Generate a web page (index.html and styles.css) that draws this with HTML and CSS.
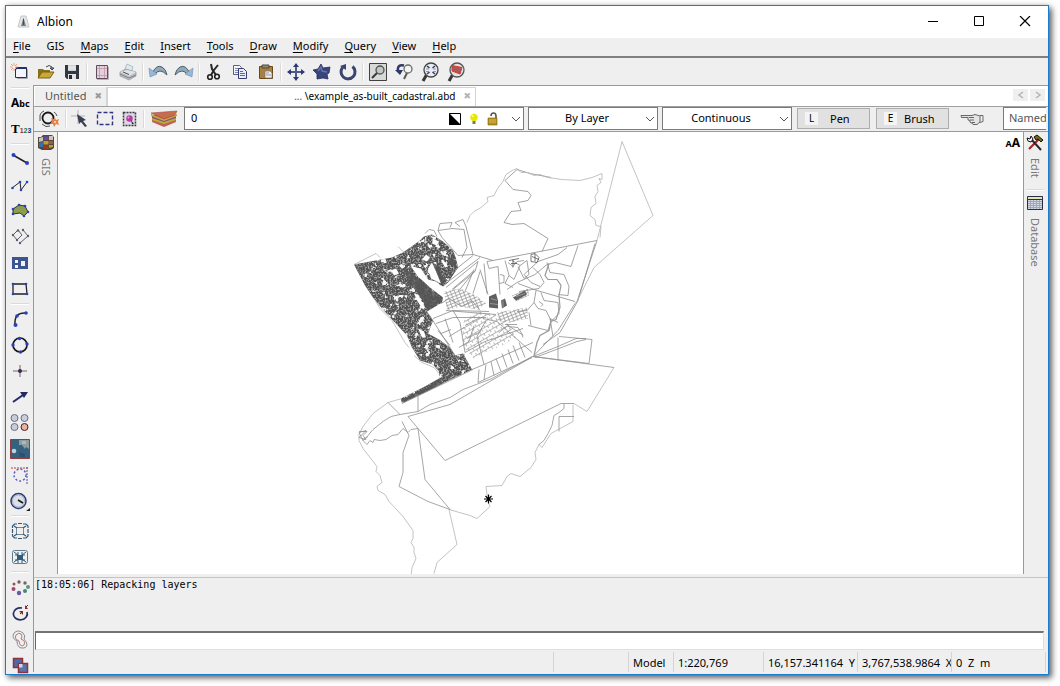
FILE: index.html
```html
<!DOCTYPE html>
<html lang="en">
<head>
<meta charset="utf-8">
<title>Albion</title>
<link rel="stylesheet" href="styles.css">
</head>
<body>
<div class="window">
  <header class="titlebar">
    <svg class="app-icon" viewBox="0 0 14 14"><path d="M4 1h5l3 11H1z" fill="#e4e6e8" stroke="#c4c8cc"/><path d="M6.500 2.500L9 11H4z" fill="#7b8085"/><path d="M6.500 4v6" stroke="#484c50"/></svg>
    <h1 class="title">Albion</h1>
    <div class="window-controls">
      <button class="win-btn" aria-label="Minimize"><svg viewBox="0 0 12 12"><path d="M1 5.500h10" stroke="#000"/></svg></button>
      <button class="win-btn" aria-label="Maximize"><svg viewBox="0 0 12 12"><path d="M1.500.500h9v9h-9z" fill="none" stroke="#000"/></svg></button>
      <button class="win-btn" aria-label="Close"><svg viewBox="0 0 12 12"><path d="M1 0l10 10M11 0L1 10" stroke="#000" stroke-width="1.200"/></svg></button>
    </div>
  </header>

  <nav class="menubar">
    <button class="menu"><u>F</u>ile</button><button class="menu">GIS</button><button class="menu"><u>M</u>aps</button><button class="menu"><u>E</u>dit</button><button class="menu"><u>I</u>nsert</button><button class="menu"><u>T</u>ools</button><button class="menu"><u>D</u>raw</button><button class="menu"><u>M</u>odify</button><button class="menu"><u>Q</u>uery</button><button class="menu"><u>V</u>iew</button><button class="menu"><u>H</u>elp</button>
  </nav>

  <div class="toolbar">
    <button class="tool" aria-label="New"><svg viewBox="0 0 20 20"><path d="M5.500 5.500h11v10h-11z" fill="#f4f6ff" stroke="#303048"/><path d="M6 5h10.500v2H6z" fill="#24306c"/><path d="M17.500 7v9.500H7" fill="none" stroke="#a8a8b0"/><path d="M4 1v8M0 5h8M1 2l6 6M7 2L1 8" stroke="#e8a080"/><circle cx="4" cy="5" r="1.500" fill="#fff4e0"/></svg></button>
    <button class="tool" aria-label="Open"><svg viewBox="0 0 20 20"><path d="M2 7h5l1 1h6v7H2z" fill="#8c7018"/><path d="M2 16l4-6h12l-4 6z" fill="#c8a838" stroke="#7c6010"/><path d="M10 5q3-3 6 0v2M14 6h4l-2 2z" fill="none" stroke="#404850"/></svg></button>
    <button class="tool" aria-label="Save"><svg viewBox="0 0 20 20"><path d="M3 3h14v14H5l-2-2z" fill="#34383e"/><path d="M6 3h8v6H6z" fill="#c8d0d8"/><path d="M6 5h8M6 7h8" stroke="#f8f8f8"/><path d="M6 12h8v5H6z" fill="#e0e4e8"/><path d="M7 13h3v4H7z" fill="#282c32"/></svg></button>
    <span class="sep-v"></span>
    <button class="tool" aria-label="Page layout"><svg viewBox="0 0 20 20"><path d="M4.500 3.500h11v13h-11z" fill="#e2d0da" stroke="#604c60"/><path d="M7.500 4v12M12.500 4v12M5 6.500h10M5 13.500h10" stroke="#c894a4" stroke-width=".8"/><path d="M5 17.500h11.500V5" fill="none" stroke="#b8b0b8"/></svg></button>
    <button class="tool" aria-label="Print"><svg viewBox="0 0 20 20"><path d="M6 9l3-7 6 3-2 6z" fill="#dceaf4" stroke="#b0bcc4"/><path d="M2 10l6-3 10 3v4l-7 4-9-4z" fill="#bcc0c4" stroke="#909498" stroke-width=".7"/><path d="M2 10l9 4 7-4-9-2z" fill="#e0e2e4"/><path d="M2 12l9 4 7-3" fill="none" stroke="#7c8084"/><path d="M5 10l6 2.500" stroke="#484c50"/></svg></button>
    <span class="sep-v"></span>
    <button class="tool" aria-label="Undo"><svg viewBox="0 0 20 20"><path d="M4 12Q8 2 14 5q4 2 5 8-4-4-7-4-3 0-6 4z" fill="#90a8b8" stroke="#4c6070"/><path d="M1 6l1 9 7-3z" fill="#98b8d8" stroke="#6c8cac" stroke-width=".6"/></svg></button>
    <button class="tool" aria-label="Redo"><svg viewBox="0 0 20 20"><path d="M16 12Q12 2 6 5q-4 2-5 8 4-4 7-4 3 0 6 4z" fill="#90a8b8" stroke="#4c6070"/><path d="M19 6l-1 9-7-3z" fill="#98b8d8" stroke="#6c8cac" stroke-width=".6"/></svg></button>
    <span class="sep-v"></span>
    <button class="tool" aria-label="Cut"><svg viewBox="0 0 20 20"><path d="M7 2l1 5 4 6M14 3l-4 5-3 5" fill="none" stroke="#282828" stroke-width="2"/><circle cx="6" cy="15" r="2.300" fill="none" stroke="#202020" stroke-width="1.600"/><circle cx="13" cy="14.500" r="2.300" fill="none" stroke="#202020" stroke-width="1.600"/></svg></button>
    <button class="tool" aria-label="Copy"><svg viewBox="0 0 20 20"><path d="M3.500 3.500h6l2 2v7h-8z" fill="#f4f6fc" stroke="#586088"/><path d="M5 6.500h4M5 8.500h4M5 10.500h3" stroke="#8088b0"/><path d="M8.500 6.500h5l3 3v7h-8z" fill="#e8ecfa" stroke="#343c70"/><path d="M10 9.500h3M10 11.500h5M10 13.500h5" stroke="#6068a0"/></svg></button>
    <button class="tool" aria-label="Paste"><svg viewBox="0 0 20 20"><path d="M3.500 4.500h13v12h-13z" fill="#a88040" stroke="#684818"/><path d="M6 3h7v3H6z" fill="#8c887c" stroke="#504838"/><path d="M9 9h5l2 2v5H9z" fill="#f0f0f4" stroke="#707080" stroke-width=".7"/><path d="M10 11h3M10 13h5" stroke="#9898a8"/></svg></button>
    <span class="sep-v"></span>
    <button class="tool" aria-label="Move"><svg viewBox="0 0 20 20"><path d="M10 3v14M3 10h14" stroke="#505888" stroke-width="2"/><path d="M10 1l3 4H7zM10 19l3-4H7zM1 10l4-3v6zM19 10l-4-3v6z" fill="#303870"/></svg></button>
    <button class="tool" aria-label="Transform"><svg viewBox="0 0 20 20"><path d="M9 2l2 4 7-1-1 6-2 1 1 5-5-1-6 1 0-5-4-4 5-1z" fill="#38447c" stroke="#252c5c" stroke-width=".8"/><path d="M6 9l3-4 1 4 5 1" fill="none" stroke="#6474a8" stroke-width="1.500"/></svg></button>
    <button class="tool" aria-label="Rotate"><svg viewBox="0 0 20 20"><path d="M5 5a7 7 0 1 0 9.500-.5" fill="none" stroke="#3c4470" stroke-width="3"/><path d="M2 4l6-2v6z" fill="#3c4470"/></svg></button>
    <span class="sep-v"></span>
    <button class="tool" aria-label="Zoom"><svg viewBox="0 0 20 20"><path d="M1.500 1.500h17v17h-17z" fill="#d8d8d8" stroke="#404040"/><circle cx="12" cy="8" r="4" fill="#c4c8c4" stroke="#505450" stroke-width="1.300"/><path d="M9 11l-5 5" stroke="#383838" stroke-width="2"/></svg></button>
    <button class="tool" aria-label="Zoom previous"><svg viewBox="0 0 20 20"><path d="M13 11l-3 6" stroke="#585858" stroke-width="2"/><circle cx="14" cy="7" r="4" fill="#f4f4f4" stroke="#686c68" stroke-width="1.300"/><path d="M10 3.500Q3 2 4 9" fill="none" stroke="#303868" stroke-width="2.500"/><path d="M1 8h8l-3 5z" fill="#303868"/></svg></button>
    <button class="tool" aria-label="Zoom extents"><svg viewBox="0 0 20 20"><path d="M7 12l-4 7" stroke="#383838" stroke-width="3"/><circle cx="11" cy="8" r="7" fill="#e8ecec" stroke="#444" stroke-width="1.300"/><path d="M7 4l2.500 2M15 4l-2.500 2M7 12l2.500-2M15 12l-2.500-2" stroke="#303c80" stroke-width="1.600"/><path d="M6 7h3M13 7h3M6 9.500h3M13 9.500h3" stroke="#7480b0" stroke-width=".8"/></svg></button>
    <button class="tool" aria-label="Zoom window"><svg viewBox="0 0 20 20"><path d="M7 12l-4 7" stroke="#383838" stroke-width="3"/><circle cx="11" cy="8" r="7" fill="#e0e4e4" stroke="#555" stroke-width="1.300"/><path d="M6 3.500l10 2-2 6.500-8-3z" fill="#a85858" stroke="#e03828"/></svg></button>
  </div>

  <div class="main">
    <aside class="side-tools">
      <span class="sep-h"></span>
      <button class="tool abc">A<small>bc</small></button>
      <button class="tool numbered">T<small><i class="n1">1</i><i class="n2">2</i><i class="n3">3</i></small></button>
      <span class="sep-h"></span>
      <button class="tool" aria-label="Line"><svg viewBox="0 0 20 20"><path d="M3 6l14 8" stroke="#222" stroke-width="1.500"/><g fill="#2840c0"><circle cx="3.500" cy="6" r="2"/><circle cx="17" cy="14" r="2"/></g></svg></button>
      <button class="tool" aria-label="Polyline"><svg viewBox="0 0 20 20"><path d="M2 13l8-6 1 8 6-8" fill="none" stroke="#222"/><g fill="#2840c0"><circle cx="2.500" cy="13" r="1.300"/><circle cx="10" cy="7" r="1.300"/><circle cx="11" cy="15" r="1.300"/><circle cx="17" cy="7" r="1.300"/></g></svg></button>
      <button class="tool" aria-label="Polygon"><svg viewBox="0 0 20 20"><path d="M3 8l6-4 6 1 3 6-4 4-4-3-7 1z" fill="#8c9c50" stroke="#303820"/><g fill="#2840c0"><circle cx="3" cy="8" r="1.300"/><circle cx="9" cy="4" r="1.300"/><circle cx="15" cy="5" r="1.300"/><circle cx="18" cy="11" r="1.300"/><circle cx="14" cy="15" r="1.300"/><circle cx="3" cy="13" r="1.300"/></g></svg></button>
      <button class="tool" aria-label="Parallel lines"><svg viewBox="0 0 20 20"><path d="M3 8l4 5 5-5-4-5zM10 16l8-7M13 3l5 6" fill="none" stroke="#606068"/><g fill="#585c70"><circle cx="3" cy="8" r="1.200"/><circle cx="8" cy="3.500" r="1.200"/><circle cx="7" cy="13" r="1.200"/><circle cx="13" cy="3" r="1.200"/><circle cx="18" cy="9" r="1.200"/><circle cx="10" cy="16" r="1.200"/></g></svg></button>
      <button class="tool" aria-label="Polygon hole"><svg viewBox="0 0 20 20"><path d="M2 4h16v12H2z" fill="#3c5490"/><path d="M5 7h3v3H5zM5 12h3v3H5zM11 8h4v5h-4z" fill="#f0f4f8"/></svg></button>
      <button class="tool" aria-label="Rectangle"><svg viewBox="0 0 20 20"><path d="M3 5h13l1 10H3z" fill="none" stroke="#222" stroke-width="1.300"/><g fill="#2840c0"><circle cx="3" cy="5" r="1.300"/><circle cx="16" cy="5" r="1.300"/><circle cx="17" cy="15" r="1.300"/><circle cx="3" cy="15" r="1.300"/></g></svg></button>
      <span class="sep-h"></span>
      <button class="tool" aria-label="Arc"><svg viewBox="0 0 20 20"><path d="M5 16Q4 3 16 4" fill="none" stroke="#222" stroke-width="1.500"/><g fill="#2840c0"><circle cx="5.500" cy="16" r="2"/><circle cx="7" cy="7" r="1.800"/><circle cx="16" cy="4" r="1.800"/></g></svg></button>
      <button class="tool" aria-label="Circle"><svg viewBox="0 0 20 20"><circle cx="10" cy="10" r="7" fill="none" stroke="#181818" stroke-width="1.700"/><g fill="#2840c0"><circle cx="9.500" cy="3.500" r="1.700"/><circle cx="3" cy="10" r="1.700"/><circle cx="17" cy="9" r="1.700"/><circle cx="10.500" cy="17" r="1.700"/></g></svg></button>
      <button class="tool" aria-label="Point"><svg viewBox="0 0 20 20"><path d="M10 4v12M3 10h14" stroke="#806050"/><circle cx="10" cy="10" r="2" fill="#302860"/></svg></button>
      <button class="tool" aria-label="Arrow"><svg viewBox="0 0 20 20"><path d="M3 15l10-7" stroke="#202868" stroke-width="2"/><path d="M10 5l8 0-4 6z" fill="#202868"/></svg></button>
      <button class="tool" aria-label="Blocks"><svg viewBox="0 0 20 20"><g fill="#c8ccdc" stroke="#6c7078"><circle cx="4.500" cy="5" r="3.500"/><circle cx="14.500" cy="5" r="3.500"/><circle cx="4.500" cy="14" r="3.500"/><circle cx="14.500" cy="14" r="3.500" fill="#ecb0a0" stroke="#382828"/></g></svg></button>
      <button class="tool" aria-label="Raster"><svg viewBox="0 0 20 20"><path d="M.5.500h19v19H.5z" fill="#34627e" stroke="#903c40"/><path d="M9 1h10v9l-3-2-1 2-3-4-3 0z" fill="#8c9ca0"/><path d="M12 2h4v3h-4z" fill="#b0b8b8"/><circle cx="4" cy="12" r="2.300" fill="#b8d4e0"/><path d="M9 13l6 2v3h-5z" fill="#285270"/></svg></button>
      <button class="tool" aria-label="Select circle"><svg viewBox="0 0 20 20"><path d="M1 3h18" stroke="#d83840" stroke-dasharray="2 1"/><path d="M17 2v17" stroke="#5054a0" stroke-dasharray="2 1"/><circle cx="10" cy="10" r="6" fill="none" stroke="#5860c0" stroke-width="1.500" stroke-dasharray="2 2"/></svg></button>
      <button class="tool" aria-label="Measure"><svg viewBox="0 0 20 20"><circle cx="8.500" cy="10" r="7.500" fill="#dce0e8" stroke="#283c78" stroke-width="1.500"/><circle cx="8.500" cy="10" r="6" fill="none" stroke="#a8b0c0"/><path d="M8 9l5 3" stroke="#181818" stroke-width="1.700"/><path d="M20 17v3h-4z" fill="#222"/></svg></button>
      <span class="sep-h"></span>
      <button class="tool" aria-label="Expand"><svg viewBox="0 0 20 20"><path d="M6.500 6.500h7v7h-7z" fill="none" stroke="#788890"/><path d="M2.500 7V5l2-2H7M13 3h3l2 2v2M18 13v2l-2 2h-3M7 17H4.500l-2-2v-2M4 5l3 2M16 5l-3 2M16 15l-3-2M4 15l3-2M8 2.500h4M8 17.500h4M2.500 8v4M18 8v4" fill="none" stroke="#305c78" stroke-width="1.200"/></svg></button>
      <button class="tool" aria-label="Contract"><svg viewBox="0 0 20 20"><rect x="2.500" y="3.500" width="15" height="13" rx="2" fill="none" stroke="#5c7c90"/><path d="M7 8h6v5H7z" fill="#305c78"/><path d="M4 5l4 3M16 5l-4 3M16 15l-4-3M4 15l4-3M5 8h3V5M12 5v3h3M15 13h-3v3M8 16v-3H5" fill="none" stroke="#305c78"/></svg></button>
      <span class="sep-h"></span>
      <button class="tool" aria-label="Array"><svg viewBox="0 0 20 20"><circle cx="9" cy="5" r="1.700" fill="#7c5c50"/><circle cx="15" cy="6" r="1.700" fill="#686870"/><circle cx="18" cy="10" r="2" fill="#58987c"/><circle cx="15" cy="14" r="2" fill="#408878"/><circle cx="9" cy="16" r="2.200" fill="#6858a8"/><circle cx="3.500" cy="12" r="2" fill="#a04870"/><circle cx="4" cy="7" r="1.500" fill="#8c5850"/></svg></button>
      <button class="tool" aria-label="Radius"><svg viewBox="0 0 20 20"><path d="M12 5A7 6 0 1 0 17 9" fill="none" stroke="#283060" stroke-width="1.700"/><path d="M10 11l3-3M15 5l3-3" stroke="#701818"/><path d="M9 8h4v4zM15 2v4h3z" fill="#902820"/></svg></button>
      <button class="tool" aria-label="Buffer"><svg viewBox="0 0 20 20"><path d="M4 4q4-4 9 0 3 3 1 6 6 7 0 9-7 1-7-7-6-3-3-8z" fill="none" stroke="#888c98"/><path d="M6 6q3-3 5-1 2 2 0 5 5 2 3 6-4 3-5-4-5-2-3-6z" fill="none" stroke="#b87870"/></svg></button>
      <button class="tool" aria-label="Intersect"><svg viewBox="0 0 20 20"><path d="M3.500 3.500h9v9h-9z" fill="#4c6ca8" stroke="#903038" stroke-width="1.500"/><path d="M8.500 8.500h9v9h-9z" fill="#5874a8" stroke="#903038" stroke-width="1.500"/><path d="M9 9h3.500v3.500H9z" fill="#d8d0e8"/></svg></button>
    </aside>

    <div class="workspace">
      <div class="tabs">
        <div class="tab"><button class="tab-name">Untitled</button><button class="tab-close" aria-label="Close Untitled">✖</button></div>
        <div class="tab active"><button class="tab-name"><span class="dots">...</span> \example_as-built_cadastral.abd</button><button class="tab-close" aria-label="Close example">✖</button></div>
        <div class="tab-scroll">
          <button class="scroll-btn" aria-label="Scroll left"><svg viewBox="0 0 8 8"><path d="M6 1L2 4l4 3" fill="none" stroke="#b4b4b4" stroke-width="1.500"/></svg></button>
          <button class="scroll-btn" aria-label="Scroll right"><svg viewBox="0 0 8 8"><path d="M2 1l4 3-4 3" fill="none" stroke="#b4b4b4" stroke-width="1.500"/></svg></button>
        </div>
      </div>

      <div class="props">
        <button class="ptool wide" aria-label="Snap"><svg viewBox="0 0 20 20"><circle cx="9" cy="9" r="5.500" fill="none" stroke="#181818" stroke-width="1.800"/><path d="M1 12V6q1-3 4-4M3 15q4 4 8 2M15 3q2 1 3 4" fill="none" stroke="#505050"/><path d="M16 9l1 2 3-1-1 3 1 3-3-1-2 3-1-3-3 0 2-3-1-3 3 1z" fill="#e88048"/><circle cx="16" cy="13" r="1" fill="#ffe0b0"/></svg></button>
        <span class="sep-v"></span>
        <button class="ptool" aria-label="Cursor"><svg viewBox="0 0 20 20"><path d="M7 1v14M0 7h14" stroke="#b4b4b4"/><path d="M6 5l9 6-3 1 4 5-2 1-4-5-2 2z" fill="#384050"/></svg></button>
        <button class="ptool" aria-label="Select rectangle"><svg viewBox="0 0 20 20"><path d="M2.500 3.500h15v12h-15z" fill="none" stroke="#303480" stroke-width="1.400" stroke-dasharray="4 2"/></svg></button>
        <button class="ptool" aria-label="Select object"><svg viewBox="0 0 20 20"><path d="M4.500 3.500h12v13h-12z" fill="#dcd8e0" stroke="#383848" stroke-width="1.500" stroke-dasharray="2 1"/><circle cx="10.500" cy="9.500" r="3.200" fill="#b838a8"/><circle cx="9.500" cy="8.500" r="1" fill="#f0a8e0"/><path d="M12 11l3 4-2 0z" fill="#282838"/></svg></button>
        <span class="sep-v"></span>
        <button class="ptool layers" aria-label="Layers"><svg viewBox="0 0 28 20"><path d="M2 13l12 5 12-5v-3L14 14 2 10z" fill="#c06058"/><path d="M2 11l12 4 12-4V8H2z" fill="#c0a838"/><path d="M2 9l12 4 12-4V6H2z" fill="#805478"/><path d="M1 5l13 5 13-5v2l-13 5L1 7z" fill="#c8a838"/><path d="M1 4l13-1 13-1-2 4-11 4z" fill="#c86c50" stroke="#a04c48" stroke-width=".6"/></svg></button>
        <div class="combo layer-combo">
          <select aria-label="Layer"><option>0</option></select>
          <span class="layer-state">
            <svg viewBox="0 0 12 12"><path d="M.5.500h11v11H.5z" fill="#fff" stroke="#000"/><path d="M0 0l12 12H0z"/></svg>
            <svg viewBox="0 0 12 12"><path d="M4 8Q1 5 3 2q3-3 6 0 2 3-1 6z" fill="#e8e800"/><path d="M4.500 8h3v3h-3z" fill="#787868"/><circle cx="4.500" cy="3" r="1" fill="#ffffa0"/></svg>
            <svg viewBox="0 0 12 14"><path d="M4 4q0-3 2.500-3T9 4v4" fill="none" stroke="#585848" stroke-width="1.600"/><path d="M1 6h9v7H1z" fill="#b89020" stroke="#806010" stroke-width=".6"/><path d="M2 8h7M2 10h7" stroke="#d8b848"/></svg>
          </span>
          <svg class="chev" viewBox="0 0 8 6"><path d="M0 1l4 4 4-4" fill="none" stroke="#555"/></svg>
        </div>
        <div class="combo"><select class="centered" aria-label="Colour"><option>By Layer</option></select><svg class="chev" viewBox="0 0 8 6"><path d="M0 1l4 4 4-4" fill="none" stroke="#555"/></svg></div>
        <div class="combo"><select class="centered" aria-label="Line style"><option>Continuous</option></select><svg class="chev" viewBox="0 0 8 6"><path d="M0 1l4 4 4-4" fill="none" stroke="#555"/></svg></div>
        <button class="style-btn"><span class="key">L</span>Pen</button>
        <button class="style-btn"><span class="key">E</span>Brush</button>
        <button class="hand" aria-label="Match properties"><svg viewBox="0 0 24 16"><path d="M1 4.500h11l3-1 5 1.500v6l-3 2.500h-4l-1-1.500-2-.5v-2l-2-.5 0-2.500H1.500z" fill="#e4e4e4" stroke="#686868"/><path d="M9 6.500h5M10 9h4M12 11.500h3M20 4.500h3v6l-3 1" fill="none" stroke="#686868"/></svg></button>
        <input class="named" type="text" value="Named" aria-label="Named style">
      </div>

      <div class="view">
        <div class="panel-tabs left-panel">
          <button class="panel-tab"><svg viewBox="0 0 18 18"><path d="M1 3h3l2-2h9l2 2v11l-3 2H5l-4-2z" fill="#50483c"/><path d="M2 4l4-1v4L2 8zM12 2h4v4h-4z" fill="#d0c4b0"/><path d="M6.500 2.500h5V6h-5z" fill="#6848a8"/><path d="M2 9l4-1v5H2z" fill="#3870b0"/><path d="M6.500 7h5v3.500h-5zM12 11h4v2l-4 1z" fill="#c89c28"/><path d="M6.500 11.500h5V15h-5z" fill="#983c24"/><path d="M12 7h4v3h-4z" fill="#a05848"/></svg><span class="vtext">GIS</span></button>
        </div>
        <div class="canvas">
          <svg class="map" viewBox="58 132 965 441" preserveAspectRatio="xMidYMid meet">
            <defs>
              <filter id="speckle" x="0" y="0" width="1" height="1" color-interpolation-filters="sRGB">
                <feTurbulence type="fractalNoise" baseFrequency=".6" numOctaves="2" seed="4" result="fine"/>
                <feColorMatrix in="fine" values="0 0 0 0 .66  0 0 0 0 .66  0 0 0 0 .66  4 0 0 0 -1.800" result="fineDots"/>
                <feTurbulence type="fractalNoise" baseFrequency=".16" numOctaves="3" seed="9" result="coarse"/>
                <feColorMatrix in="coarse" values="0 0 0 0 .96  0 0 0 0 .96  0 0 0 0 .96  12 0 0 0 -7.300" result="coarseDots"/>
                <feMerge result="dots"><feMergeNode in="fineDots"/><feMergeNode in="coarseDots"/></feMerge>
                <feComposite in="dots" in2="SourceAlpha" operator="in" result="inside"/>
                <feMerge><feMergeNode in="SourceGraphic"/><feMergeNode in="inside"/></feMerge>
              </filter>
              <pattern id="hatch" width="4" height="3" patternUnits="userSpaceOnUse" patternTransform="rotate(-22)"><path d="M0 .5h4M.5 0v3" stroke="#909090" stroke-width=".7"/></pattern>
              <pattern id="grid" width="7" height="5" patternUnits="userSpaceOnUse" patternTransform="rotate(-30)"><path d="M0 .5h7M.5 0v3M4.500 3v2" stroke="#9c9c9c" stroke-width=".7"/></pattern>
            </defs>
            <path filter="url(#speckle)" fill="#505050" d="M354 264L392 257 403 252 420 240 424 236 432 234 443 241 453 250 456 258 458 267 448 282 443 286 436 281 428 279 421 268 411 266 418 276 430 287 443 297 442 302 427 311 433 320 428 333 439 339 450 347 455 355 463 353 472 369 440 384 402 403 401 398 423 387 439 378 439 371 433 364 420 360 412 347 407 335 393 320 382 308 373 297 365 285z"/>
            <path fill="#555" opacity=".85" d="M403 267L417 277 430 288 442 298 441 302 428 310 418 293 408 281zM432 262l7 3 3 10 6 5-8 5zM447 256l7 3 4 9-9-4zM401 399l26-12 12-8 4 4-20 10-21 9z"/>
            <path fill="#fff" d="M411 265L421 269 428 279 440 287 432 287 418 276zM426 254l4 3-3 4-5-2zM433 238l6 3-2 4-5-2zM428 268l4-6 4 9 5 12-10-5zM414 293l4 1 7 13-2 2-6-9zM391 270l5-2 3 5-5 2zM418 328l6 3 2 6-4 0zM443 259l5 7-3 1-4-7z"/>
            <path fill="url(#hatch)" d="M444 291l16-3 16 7 10 8-8 6-18-3-13 4zM497 312l30-5 1 11-18 4-10-1zM512 295l16-7 1 7-13 6z"/>
            <path fill="url(#grid)" d="M478 311L495 314 509 324 516 337 502 345 486 352 474 358 463 346 462 330 464 320z"/>
            <path fill="#606060" d="M489 296l7-3 2 7 0 8-9-1zM501 300l4-2 2 7-5 3zM513 297l12-7 2 4-11 6z"/>
            <path d="M491 298l6 2M490 303l8 1M503 300v7M516 296l9-3" stroke="#bbb" stroke-width=".6"/>

            <g class="parcels">
              <path d="M458 255l15-1 20 6 104-20M458 255l-16-18-4-7 14-2 12 1 3 18-5 10M438 230l2-7 12-1-2 5M460 226l-5-4 8-3 3 7 7 28M425 233l4-4 5 1 3 6"/>
              <path d="M517 169l-12 11 8 9 15 2 3 4-3 5-10 2 3 8-10 1-7 11 8 2 12-1 24 15-6 13M517 169l13 4 21 4"/>
              <path d="M597 240l-20 61-2 2-17 27-25 26M595 243l-17 57-18 32-17 12"/>
              <path d="M458 267l15-12M443 285l37-28M446 287l32-26-3 10-22 18M452 289l21-18M459 290l16-20M465 291l9-22M473 293l7-22M480 269l8 25M484 263l3 30M493 260l-6 1 2 7 9-2 2 28M500 274l4 1v7l-5 1M505 260l4 15 5 4 6-14-8-5M509 275l-4 8 8 4M520 265l7-5 2 14-5 4-6-12M508 262l5 4 4-5 7-1"/>
              <path d="M567 247l-9 7-20 7-14 13M578 245l-7 21-16-4-8 2-12 10-18 8-10 7M547 262l3 10 14 2 5 12-1 9-10-1M518 283l19 7 38 11M524 274l7 8 9 4M533 267l7 7 4 8-5 6-20 3"/>
              <path d="M536 290l-2 12-7 8-10 1M541 292l3 8 14 2 1 11-8 8M534 302l4 6 8 2 5 10-3 10-20-5M529 312l2 13M539 301l4 3-2 2"/>
              <path d="M441 303l8-5 13 8 10-6 8 10M433 318l20-8 36 1M436 323l17-6 33 0M446 310l50 4M445 318l8 24M453 310l7 12 5 30M449 336l15-9M465 325l15-8M467 338l14-7M459 347l10-6 5-16M438 330l12 15M429 314l28 44 8-4M441 333l10-4"/>
              <path d="M483 318l14 3 35 31M465 352l20-11 38-13M472 369l12-5-7-28 9-16M484 364l49-22M479 369l-1 13 54-25M486 364l-2 15M491 361l3 14M496 358l5 13M502 353l5 14M508 349l5 14M513 345l6 15M519 342l6 15"/>
              <path d="M500 331l8-6 14 9 1 3M508 326l10 1 5 8M505 324l12 0M553 336l-3-18 8 4"/>
              <path d="M531 254l4-1 4 4-2 5-6-1zM532 256l7 3M535 253v8M509 260l10-2M511 263h6M513 259v8" stroke="#555"/>
            </g>
            <path d="M549 263l-4 12 3 4 9 0 4 6-2 10 1 12-4 12-5 2-2 9-9 5-3 7-3 13" fill="none" stroke="#999" stroke-width="1.200"/>
            <g class="coast">
              <path d="M467 222l3-7 4-4 7-4 7-6-1-4 7-2 3-6 6-8 3-7 6-4 5-2 4 4 7 0 6 3 6-1 8 3 14 2 18 1 12-3 10-4v6l-3-1 2 4-4 3 1 6-3 5 1 7-5 4-1 8 5 4 1 6 5 1-1 11"/>
              <path d="M597 240l25-99 31 74-59 52-17 34"/>
              <path d="M354 264l22-11 4 4M398 246l6 6M374 298l6 10 12 12 13 22 4 5M414 355l8 7 12 5 5 6"/>
              <path d="M402 398l-14 4-15 11-10 13-4 8 0 6 4 8 14 18-1 5 4 4 2 7-5 4 1 4 7 4 4 7 14 15 10 14 0 8-2 4 3 5 0 5 2 6-4 9-1 9"/>
              <path d="M449 509l8 35-20 18-3 11M449 509l21 6 7 3 13-12-2-5-2-15 16-1 5-9 4-3 9 3 11-9 5-8-1-7 4-8 3 3 9-14 22-12v-17"/>
              <path d="M574 403l13 8 27-44"/>
            </g>
            <g class="road">
              <path d="M388 402l12 12 18-3 12-7 20-7 13-8 29-11 40-22M418 395v16M402 403l71-34"/>
              <path d="M408 416l42-12 83-48 81 11M408 416l37 44 116-57 13 0M564 403v5l-5 4-5 3-2 10-4 8-4 7-5 4M559 416h15M559 416v15"/>
              <path d="M559 336l33 3-3 24-56-7M558 337v23M533 356l25-10 18-8 10 0M535 357l24-9 18-7 9-2"/>
              <path d="M400 414l-9 2-8 5-10 8-5 6-5 5 4 4 3-4 3 2 1-3 6 1 6-1 6-4 6-1 5-6 5 4 3-3 7-1 7 51 25 30-22-8-29-15 4-14v-20l6-17-7-14"/>
              <path d="M359 431h8l-4 4 3 4-7-2 7-7-7 2 4 8 5-4"/>
            </g>
            <path d="M488.500 494v9M484 498.500h9M485.500 495.500l6 6M491.500 495.500l-6 6" stroke="#000" stroke-width="1.200"/>
          </svg>
          <button class="text-size" aria-label="Text size"><small>A</small>A</button>
        </div>
        <div class="panel-tabs right-panel">
          <button class="panel-tab"><svg viewBox="0 0 18 18"><path d="M3 15L13 5" stroke="#a82028" stroke-width="2.200"/><path d="M5 5l10 11" stroke="#282828" stroke-width="2"/><path d="M8 3l3-2 6 5-2 2-3-3-2 1z" fill="#706c10" stroke="#111"/><path d="M1 4l3 1 1-3 2 3-2 3-3-1z" fill="#fff" stroke="#111"/></svg><span class="vtext">Edit</span></button>
          <span class="sep-h"></span>
          <button class="panel-tab"><svg viewBox="0 0 18 18"><path d="M1 2h16v14H1z" fill="#d4d8e4"/><path d="M1 3h16v2H1z" fill="#e8e4b0"/><path d="M2 7.500h14M2 9.500h14M2 11.500h14M2 13.500h14M4.500 6v9M7.500 6v9M10.500 6v9M13.500 6v9" stroke="#a0a8bc"/><path d="M1.500 2.500h15v13h-15zM1 5.500h16" fill="none" stroke="#283048"/></svg><span class="vtext">Database</span></button>
        </div>
      </div>

      <div class="log">[18:05:06] Repacking layers</div>
      <input class="command" type="text" aria-label="Command">
      <footer class="status">
        <span class="cell grow"></span><span class="cell spare"></span><span class="cell mode">Model</span><span class="cell scale">1:220,769</span><span class="cell coord">16,157.341164&nbsp; Y</span><span class="cell coord">3,767,538.9864&nbsp; X</span><span class="cell coord">0&nbsp; Z&nbsp; m</span>
      </footer>
    </div>
  </div>
</div>
</body>
</html>
```
FILE: styles.css
```css
* { box-sizing: border-box; }
html, body { height: 100%; }
body {
  margin: 0;
  padding: 5px 11px 11px 5px;
  background: #fff;
  color: #000;
  font: 11px/16px "Noto Sans", "Open Sans", sans-serif;
}
button, input, select {
  margin: 0;
  padding: 0;
  border: 0;
  border-radius: 0;
  background: none;
  color: inherit;
  font: inherit;
}
svg { display: block; flex: none; }

.window {
  display: flex;
  flex-direction: column;
  height: 100%;
  overflow: hidden;
  border: 1px solid #1a7bd0;
  background: #efefef;
  box-shadow: 3px 3px 6px rgba(0, 0, 0, .6), 0 0 5px rgba(0, 0, 0, .15);
}

.titlebar { display: flex; flex: none; align-items: center; height: 32px; padding-left: 11px; background: #fff; }
.app-icon { width: 14px; height: 14px; }
.title { flex: 1; margin: 0; padding-left: 6px; font-size: 12px; font-weight: 400; }
.window-controls { display: flex; }
.win-btn { display: grid; place-items: center; width: 46px; height: 30px; }
.win-btn svg { width: 12px; height: 12px; }

.menubar { display: flex; flex: none; height: 20px; padding-bottom: 2px; border-bottom: 2px solid #808080; }
.menu { padding: 0 9px 0 7px; line-height: 16px; }
.menu u { text-underline-offset: 2px; }

.toolbar { display: flex; flex: none; align-items: center; height: 27px; padding-left: 1px; }
.tool { display: grid; flex: none; place-items: center; width: 26px; height: 26px; }
.tool svg { width: 20px; height: 20px; }
.sep-v { flex: none; width: 2px; height: 18px; margin: 0 1px; border-left: 1px solid #dadada; border-right: 1px solid #fff; }
.sep-h { flex: none; width: 18px; height: 2px; margin: 1px 0; border-top: 1px solid #dadada; border-bottom: 1px solid #fff; }

.main { display: flex; flex: 1; min-height: 0; }
.side-tools { display: flex; flex: none; flex-direction: column; align-items: center; width: 27px; padding: 1px 0 0 1px; overflow: hidden; }
.abc { display: block; padding-left: 4px; font-weight: 700; font-size: 12px; text-align: left; }
.abc small { font-size: 9px; }
.numbered { display: block; padding-left: 4px; text-align: left; white-space: nowrap; font: 700 13px/16px "Liberation Serif", serif; }
.numbered small { font: 700 7px/10px "Liberation Sans", sans-serif; }
.numbered i { font-style: normal; }
.n1 { color: #a03030; }
.n2 { color: #207838; }
.n3 { color: #283070; }

.workspace { display: flex; flex: 1; flex-direction: column; min-width: 0; margin-bottom: 2px; border-top: 1px solid #999; border-left: 1px solid #999; }

.tabs { display: flex; flex: none; height: 21px; padding: 1px 1px 0; border-bottom: 1px solid #a0a0a0; background: #fff; }
.tab { display: flex; align-items: center; gap: 8px; padding: 0 4px 2px 10px; background: #efefef; border-right: 2px solid #d4d4d4; color: #555; }
.tab.active { justify-content: flex-end; width: 368px; border-right-width: 1px; border-top: 1px solid #d4d4d4; background: #fff; color: #000; }
.tab.active .tab-name { font-size: 10px; }
.tab-close { color: #999; font: 9px/14px "DejaVu Sans", sans-serif; }
.tab.active .tab-close { color: #b4b4b4; }
.dots { color: #555; }
.tab-scroll { display: flex; gap: 2px; margin-left: auto; padding: 2px 2px 5px; }
.scroll-btn { display: grid; place-items: center; width: 15px; background: #efefef; }
.scroll-btn svg { width: 8px; height: 8px; }

.props { display: flex; flex: none; align-items: center; height: 25px; padding-bottom: 1px; overflow: hidden; border-bottom: 1px solid #999; }
.ptool { display: grid; flex: none; place-items: center; width: 24px; height: 24px; }
.ptool svg { width: 20px; height: 20px; }
.ptool.wide { width: 29px; }
.props .sep-v { margin: 0 2px; }
.ptool.layers { width: 34px; }
.ptool.layers svg { width: 28px; }
.combo { position: relative; flex: none; width: 130px; height: 23px; margin-left: 4px; }
.combo select { width: 100%; height: 100%; padding: 0 20px 1px 6px; appearance: none; border: 1px solid #7a7a7a; background: #fff; }
.combo select.centered { padding: 0 16px 1px 4px; text-align-last: center; }
.chev { position: absolute; top: 9px; right: 4px; width: 8px; height: 6px; pointer-events: none; }
.layer-combo { width: 340px; margin-left: 3px; }
.layer-state { position: absolute; top: 5px; right: 25px; display: flex; align-items: center; gap: 7px; pointer-events: none; }
.layer-state svg { width: 12px; height: 12px; }
.layer-state svg:last-child { height: 14px; }
.style-btn { display: flex; flex: none; align-items: center; gap: 12px; width: 73px; height: 21px; margin-left: 6px; padding-left: 7px; border: 1px solid #adadad; background: #e1e1e1; }
.combo + .style-btn { margin-left: 5px; }
.style-btn .key { width: 13px; height: 13px; background: #f4f4f4; font-size: 10px; line-height: 13px; text-align: center; }
.style-btn + .style-btn { gap: 7px; }
.hand { flex: none; width: 24px; margin: 0 19px 0 11px; }
.hand svg { width: 24px; height: 16px; }
.named { flex: 1; width: 0; min-width: 0; height: 23px; margin-right: 2px; padding: 0 0 2px 5px; border: 1px solid #7a7a7a; border-right: 0; background: #fff; color: #555; }

.view { display: flex; flex: 1; min-height: 0; }
.panel-tabs { display: flex; flex: none; flex-direction: column; align-items: center; width: 24px; }
.left-panel { border-right: 1px solid #999; }
.right-panel { width: 25px; padding-right: 2px; border-left: 1px solid #999; }
.panel-tab { display: flex; flex-direction: column; align-items: center; gap: 6px; padding: 2px 0 10px; color: #777; }
.panel-tab svg { width: 18px; height: 18px; }
.vtext { writing-mode: vertical-rl; line-height: 18px; }
.canvas { position: relative; flex: 1; min-width: 0; background: #fff; }
.map { width: 100%; height: 100%; }
.parcels, .coast, .road { fill: none; stroke-width: .8; }
.parcels { stroke: #8c8c8c; }
.coast { stroke: #b4b4b4; }
.road { stroke: #909090; }
.text-size { position: absolute; top: 3px; right: 3px; font-weight: 700; font-size: 12px; }
.text-size small { font-size: 9px; }

.log { flex: none; height: 54px; margin-top: 3px; padding-left: 1px; border-top: 1px solid #c4c4c4; font: 10px/14px "DejaVu Sans Mono", monospace; }
.command { flex: none; height: 19px; margin: 0 4px 0 1px; padding: 0 4px; border: 1px solid #e0e0e0; border-top: 2px solid #737373; border-left: 1px solid #696969; background: #fff; }
.status { display: flex; flex: none; align-items: center; height: 22px; padding: 2px 2px 0 0; }
.cell { flex: none; height: 100%; padding-left: 4px; border-right: 1px solid #d4d4d4; line-height: 21px; white-space: nowrap; overflow: hidden; }
.grow { flex: 1; }
.spare { width: 75px; }
.mode { width: 45px; }
.scale { width: 90px; }
.coord { width: 94px; }
```
